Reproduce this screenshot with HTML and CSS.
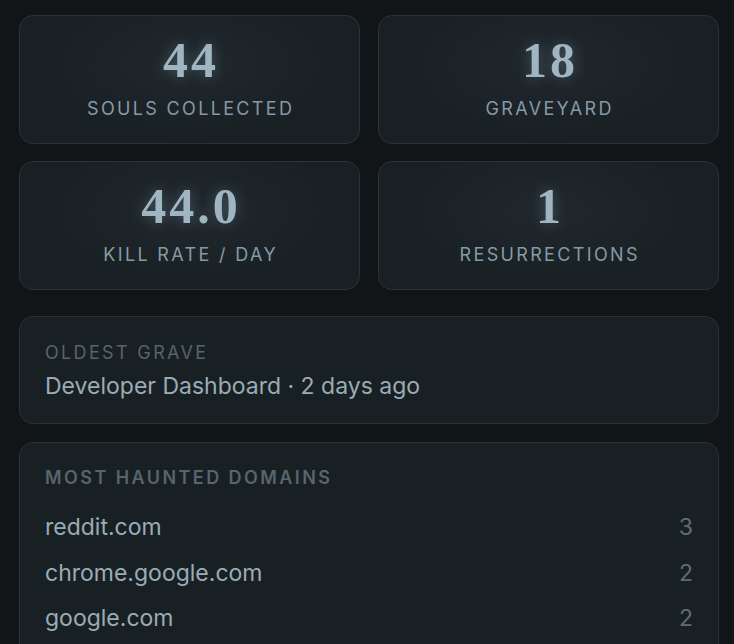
FILE: index.html
```html
<!DOCTYPE html>
<html lang="en">
<head>
<meta charset="utf-8">
<title>Graveyard Stats</title>
<link rel="stylesheet" href="styles.css">
</head>
<body>
<main class="page">
  <section class="stats">
    <div class="stat">
      <div class="stat-value">44</div>
      <div class="stat-label">Souls Collected</div>
    </div>
    <div class="stat">
      <div class="stat-value">18</div>
      <div class="stat-label">Graveyard</div>
    </div>
    <div class="stat">
      <div class="stat-value">44.0</div>
      <div class="stat-label">Kill Rate / Day</div>
    </div>
    <div class="stat">
      <div class="stat-value">1</div>
      <div class="stat-label">Resurrections</div>
    </div>
  </section>

  <section class="panel oldest">
    <div class="panel-label">Oldest Grave</div>
    <div class="oldest-text">Developer Dashboard · 2 days ago</div>
  </section>

  <section class="panel domains">
    <div class="panel-label strong">Most Haunted Domains</div>
    <ul class="domain-list">
      <li class="domain"><span class="domain-name">reddit.com</span><span class="domain-count">3</span></li>
      <li class="domain"><span class="domain-name">chrome.google.com</span><span class="domain-count">2</span></li>
      <li class="domain"><span class="domain-name">google.com</span><span class="domain-count">2</span></li>
    </ul>
  </section>
</main>
</body>
</html>
```

FILE: styles.css
```css
* { box-sizing: border-box; }

html, body {
  margin: 0;
  background: #111518;
  height: 100%;
  overflow: hidden;
}

body {
  font-family: Inter, "Noto Sans", "Liberation Sans", sans-serif;
  color: #9aacb5;
}

.page {
  padding: 15px 15px 0 19px;
  display: flex;
  flex-direction: column;
}

.stats {
  display: grid;
  grid-template-columns: 1fr 1fr;
  column-gap: 18px;
  row-gap: 17px;
}

.stat {
  height: 129px;
  border: 1px solid #2a3237;
  border-radius: 14px;
  background:
    radial-gradient(ellipse 150px 75px at 50% 38%, rgba(120, 140, 160, 0.08), rgba(120, 140, 160, 0) 100%),
    #192024;
  display: flex;
  flex-direction: column;
  align-items: center;
  padding-top: 19px;
}

.stat-value {
  font-family: "Liberation Serif", "DejaVu Serif", serif;
  font-weight: 700;
  font-size: 50px;
  line-height: 50px;
  letter-spacing: 3px;
  margin-right: -3px;
  color: #9fb5c1;
  text-shadow: 0 0 14px rgba(150, 175, 195, 0.35);
}

.stat-label {
  margin-top: 13px;
  font-size: 18px;
  line-height: 22px;
  letter-spacing: 0.13em;
  margin-right: -0.13em;
  text-transform: uppercase;
  color: #849aa5;
}

.panel {
  border: 1px solid #2a3237;
  border-radius: 14px;
  background: #192024;
  padding: 25px 25px 25px;
}

.oldest {
  margin-top: 26px;
  height: 108px;
}

.domains {
  margin-top: 18px;
  padding-top: 24px;
  padding-bottom: 40px;
}

.panel-label {
  font-size: 18px;
  line-height: 22px;
  letter-spacing: 0.13em;
  text-transform: uppercase;
  color: #56646d;
}

.panel-label.strong {
  font-weight: 600;
  letter-spacing: 0.135em;
  color: #56656e;
}

.oldest-text {
  margin-top: 7px;
  font-size: 23px;
  line-height: 30px;
  color: #9aacb5;
}

.domain-list {
  list-style: none;
  margin: 23px 0 0;
  padding: 0;
  display: flex;
  flex-direction: column;
  gap: 15.5px;
}

.domain {
  display: flex;
  justify-content: space-between;
  font-size: 23px;
  line-height: 30px;
}

.domain-name { color: #9aacb5; }
.domain-count { color: #5d6d76; }
```
